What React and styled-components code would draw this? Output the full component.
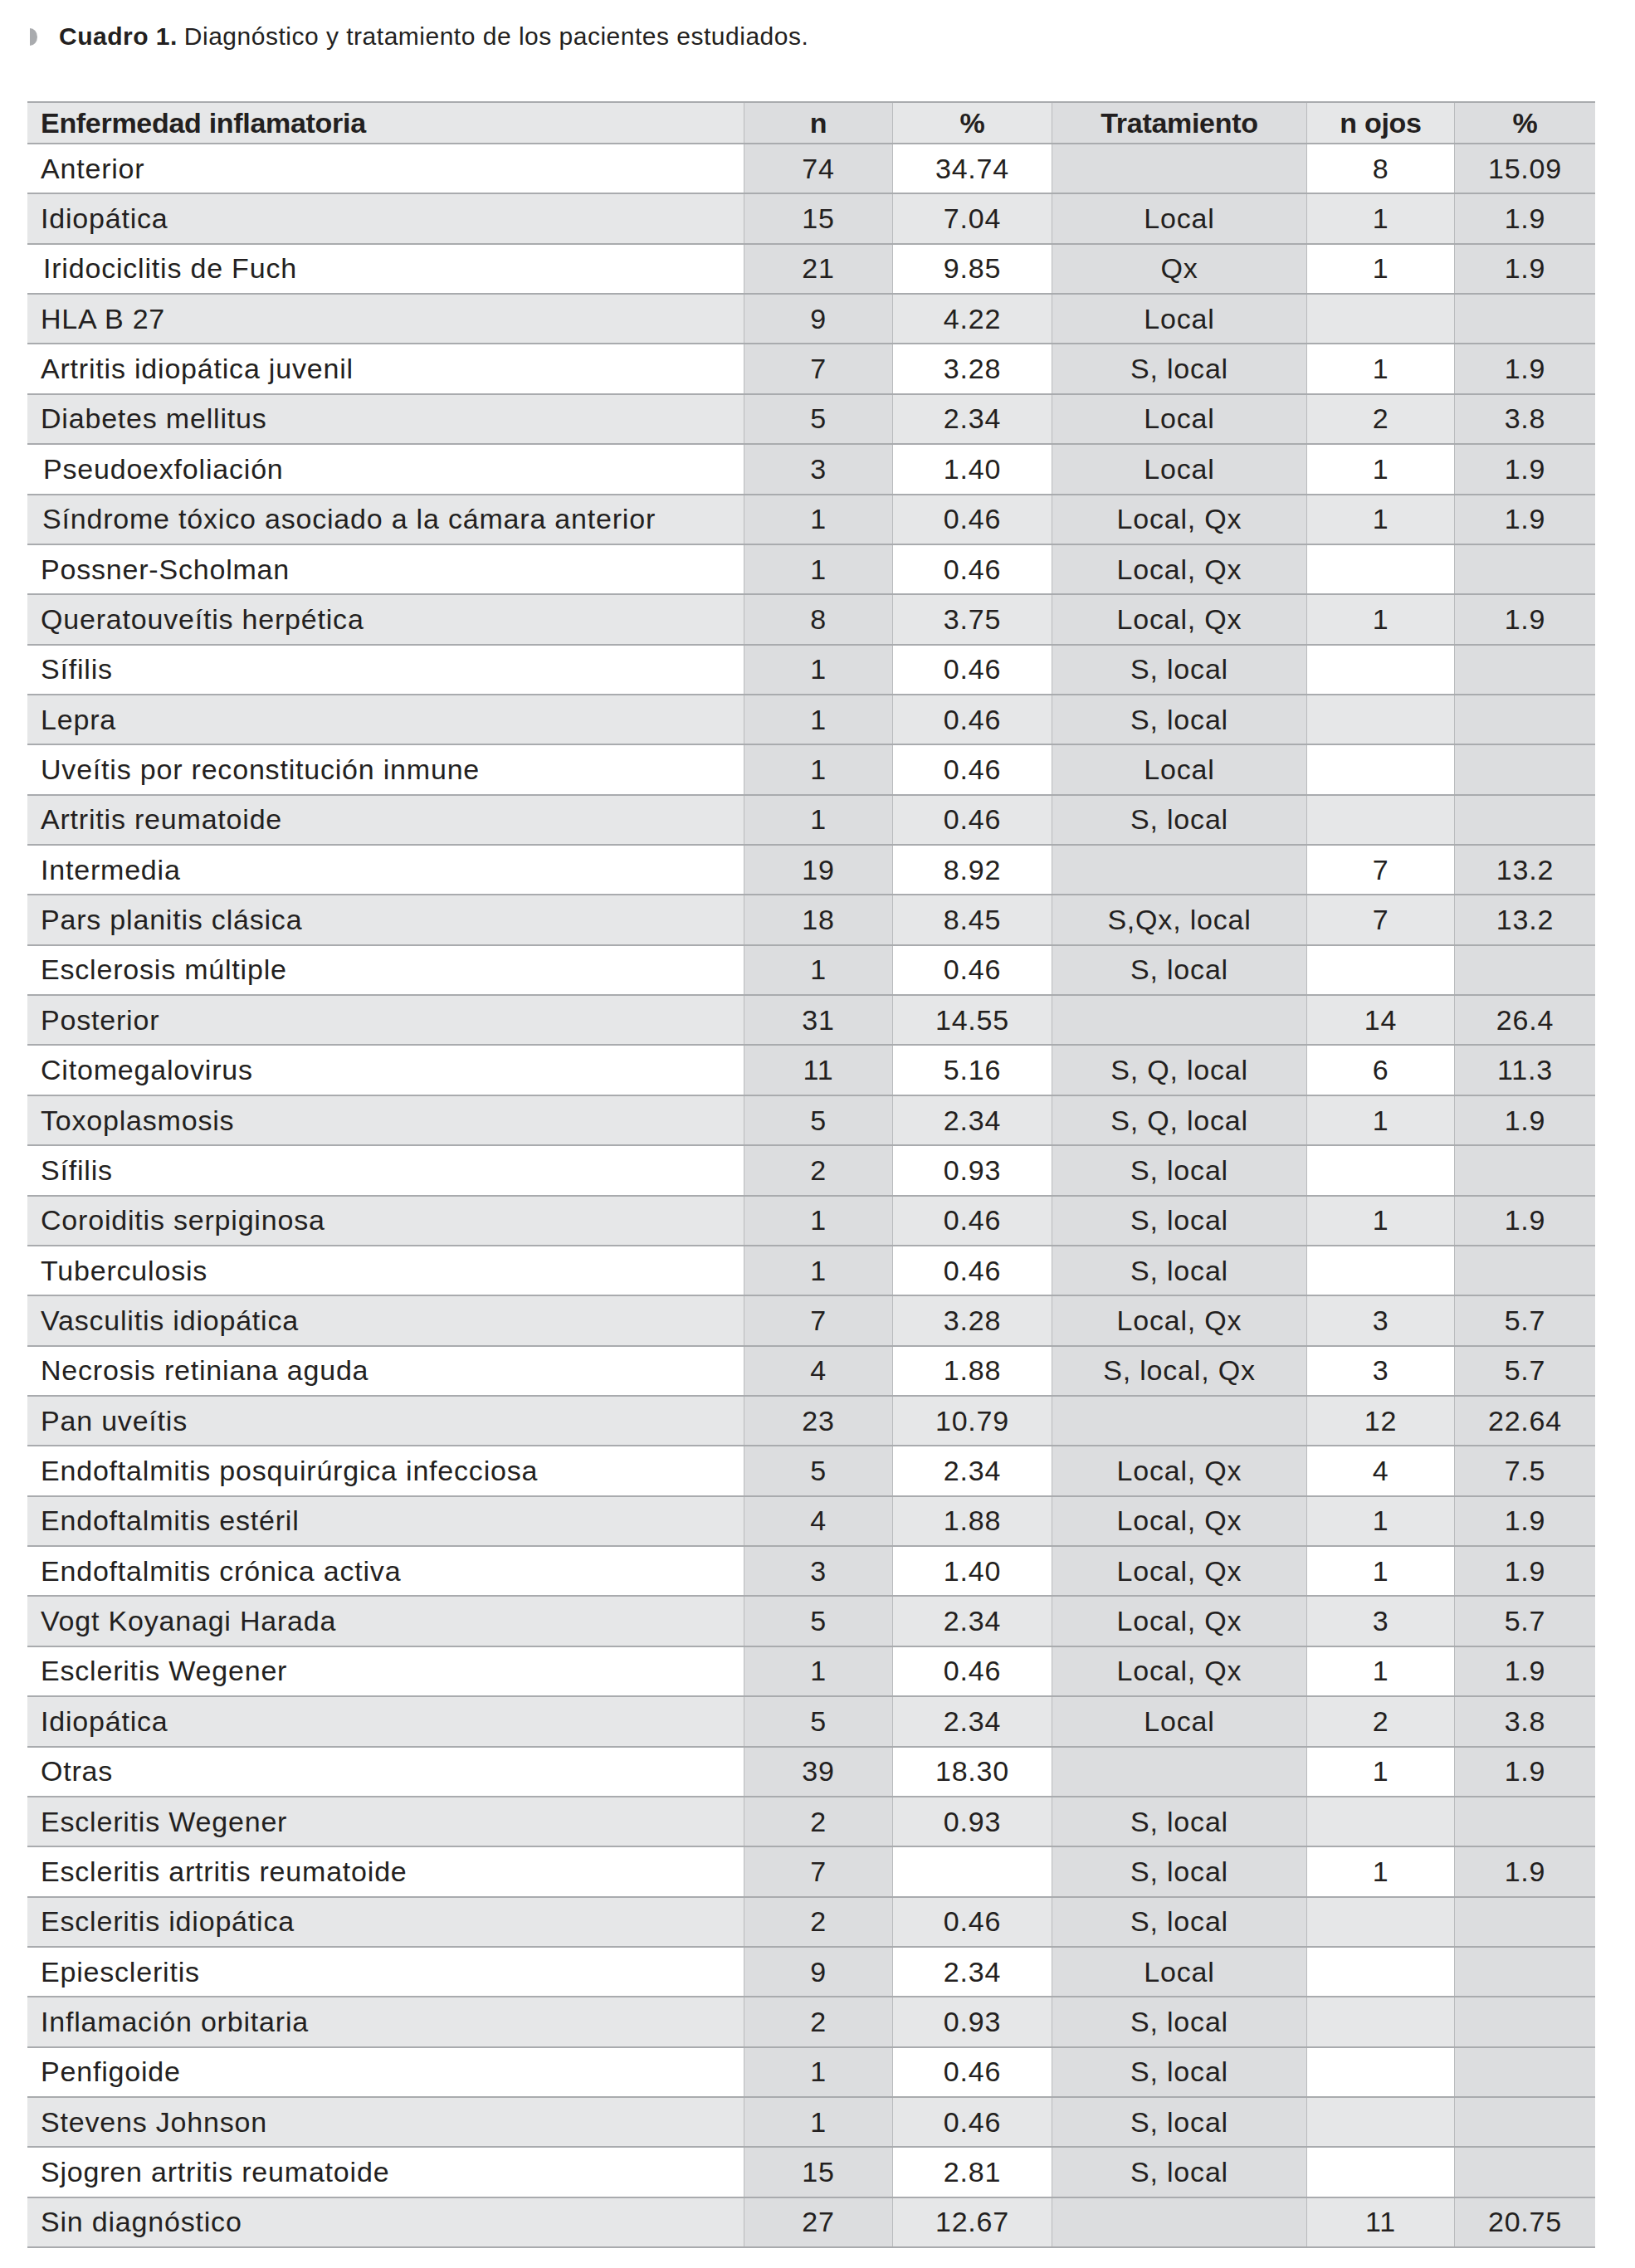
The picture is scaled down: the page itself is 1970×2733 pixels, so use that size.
import React from "react";
import styled, { createGlobalStyle } from "styled-components";

const GlobalStyle = createGlobalStyle`
  html, body { margin: 0; padding: 0; background: #ffffff; }
  body { font-family: "Liberation Sans", Arial, sans-serif; color: #231f20; }
`;

const Page = styled.div`
  width: 1970px;
  min-height: 2733px;
  padding: 29px 0 0 33px;
  box-sizing: border-box;
`;

const Caption = styled.div`
  display: flex;
  align-items: center;
  gap: 26px;
  height: 30px;
  padding-left: 3px;
  font-size: 30px;
  letter-spacing: 0.5px;
  line-height: 30px;
`;

const Bullet = styled.span`
  display: block;
  width: 9px;
  height: 21px;
  margin-top: 1px;
  background: #a9abae;
  border-radius: 0 9px 9px 0 / 0 10.5px 10.5px 0;
`;

const CaptionBold = styled.b`
  font-weight: 700;
  margin-right: 8px;
`;

const Table = styled.div`
  margin-top: 63px;
  width: 1889px;
  border-top: 2px solid #a9abae;
`;

const Row = styled.div`
  display: grid;
  grid-template-columns: 863px 179px 192px 307px 178px 170px;
  height: ${(p) => (p.$header ? "48px" : "58.36px")};
  border-bottom: 2px solid #a9abae;
`;

const shades = ["#ffffff", "#e6e7e8", "#dcdddf"];

const Cell = styled.div`
  display: flex;
  align-items: center;
  justify-content: ${(p) => (p.$first ? "flex-start" : "center")};
  padding-left: ${(p) => (p.$first ? 16 + (p.$indent || 0) : 0)}px;
  background: ${(p) => shades[p.$shade]};
  border-left: ${(p) => (p.$first ? "none" : "1px solid #b9bbbd")};
  font-size: 34px;
  letter-spacing: ${(p) => (p.$header ? "-0.3px" : "0.8px")};
  font-weight: ${(p) => (p.$header ? 700 : 400)};
  white-space: nowrap;
  overflow: hidden;
  color: #231f20;
`;

const header = ["Enfermedad inflamatoria", "n", "%", "Tratamiento", "n ojos", "%"];

const rows = [
  ["Anterior", "74", "34.74", "", "8", "15.09"],
  ["Idiopática", "15", "7.04", "Local", "1", "1.9"],
  ["Iridociclitis de Fuch", "21", "9.85", "Qx", "1", "1.9", 3],
  ["HLA B 27", "9", "4.22", "Local", "", ""],
  ["Artritis idiopática juvenil", "7", "3.28", "S, local", "1", "1.9"],
  ["Diabetes mellitus", "5", "2.34", "Local", "2", "3.8"],
  ["Pseudoexfoliación", "3", "1.40", "Local", "1", "1.9", 3],
  ["Síndrome tóxico asociado a la cámara anterior", "1", "0.46", "Local, Qx", "1", "1.9", 2],
  ["Possner-Scholman", "1", "0.46", "Local, Qx", "", ""],
  ["Queratouveítis herpética", "8", "3.75", "Local, Qx", "1", "1.9"],
  ["Sífilis", "1", "0.46", "S, local", "", ""],
  ["Lepra", "1", "0.46", "S, local", "", ""],
  ["Uveítis por reconstitución inmune", "1", "0.46", "Local", "", ""],
  ["Artritis reumatoide", "1", "0.46", "S, local", "", ""],
  ["Intermedia", "19", "8.92", "", "7", "13.2"],
  ["Pars planitis clásica", "18", "8.45", "S,Qx, local", "7", "13.2"],
  ["Esclerosis múltiple", "1", "0.46", "S, local", "", ""],
  ["Posterior", "31", "14.55", "", "14", "26.4"],
  ["Citomegalovirus", "11", "5.16", "S, Q, local", "6", "11.3"],
  ["Toxoplasmosis", "5", "2.34", "S, Q, local", "1", "1.9"],
  ["Sífilis", "2", "0.93", "S, local", "", ""],
  ["Coroiditis serpiginosa", "1", "0.46", "S, local", "1", "1.9"],
  ["Tuberculosis", "1", "0.46", "S, local", "", ""],
  ["Vasculitis idiopática", "7", "3.28", "Local, Qx", "3", "5.7"],
  ["Necrosis retiniana aguda", "4", "1.88", "S, local, Qx", "3", "5.7"],
  ["Pan uveítis", "23", "10.79", "", "12", "22.64"],
  ["Endoftalmitis posquirúrgica infecciosa", "5", "2.34", "Local, Qx", "4", "7.5"],
  ["Endoftalmitis estéril", "4", "1.88", "Local, Qx", "1", "1.9"],
  ["Endoftalmitis crónica activa", "3", "1.40", "Local, Qx", "1", "1.9"],
  ["Vogt Koyanagi Harada", "5", "2.34", "Local, Qx", "3", "5.7"],
  ["Escleritis Wegener", "1", "0.46", "Local, Qx", "1", "1.9"],
  ["Idiopática", "5", "2.34", "Local", "2", "3.8"],
  ["Otras", "39", "18.30", "", "1", "1.9"],
  ["Escleritis Wegener", "2", "0.93", "S, local", "", ""],
  ["Escleritis artritis reumatoide", "7", "", "S, local", "1", "1.9"],
  ["Escleritis idiopática", "2", "0.46", "S, local", "", ""],
  ["Epiescleritis", "9", "2.34", "Local", "", ""],
  ["Inflamación orbitaria", "2", "0.93", "S, local", "", ""],
  ["Penfigoide", "1", "0.46", "S, local", "", ""],
  ["Stevens Johnson", "1", "0.46", "S, local", "", ""],
  ["Sjogren artritis reumatoide", "15", "2.81", "S, local", "", ""],
  ["Sin diagnóstico", "27", "12.67", "", "11", "20.75"],
];

function shadeFor(col, grayRow) {
  if (col % 2 === 1) return 2;
  return grayRow ? 1 : 0;
}

export default function App() {
  return (
    <Page>
      <GlobalStyle />
      <Caption>
        <Bullet />
        <span>
          <CaptionBold>Cuadro 1.</CaptionBold>
          Diagnóstico y tratamiento de los pacientes estudiados.
        </span>
      </Caption>
      <Table>
        <Row $header>
          {header.map((h, i) => (
            <Cell key={i} $header $first={i === 0} $shade={shadeFor(i, true)}>
              {h}
            </Cell>
          ))}
        </Row>
        {rows.map((r, ri) => {
          const gray = ri % 2 === 1;
          return (
            <Row key={ri}>
              {r.slice(0, 6).map((v, ci) => (
                <Cell
                  key={ci}
                  $first={ci === 0}
                  $indent={ci === 0 ? r[6] : 0}
                  $shade={shadeFor(ci, gray)}
                >
                  {v}
                </Cell>
              ))}
            </Row>
          );
        })}
      </Table>
    </Page>
  );
}
